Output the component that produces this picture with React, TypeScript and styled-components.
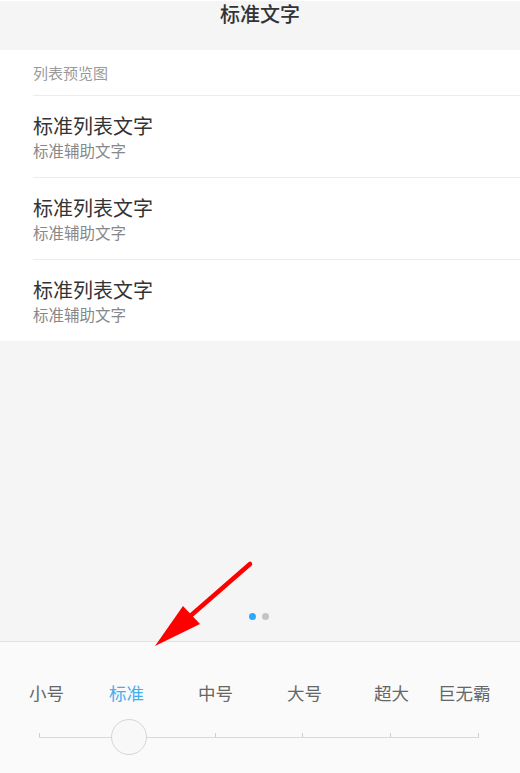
import React from "react";
import styled, { createGlobalStyle } from "styled-components";

const Global = createGlobalStyle`
  html, body { margin: 0; padding: 0; }
  body { font-family: "Noto Sans CJK SC", "Noto Sans", sans-serif; background: #f5f5f5; }
`;

const Page = styled.div`
  position: relative;
  width: 520px;
  height: 773px;
  display: flex;
  flex-direction: column;
  background: #f5f5f5;
  overflow: hidden;
`;

const Header = styled.header`
  height: 49px;
  border-top: 1px solid #ffffff;
  background: #f5f5f5;
  display: flex;
  justify-content: center;
`;

const Title = styled.h1`
  margin: 0;
  font-size: 20px;
  line-height: 26px;
  font-weight: 500;
  color: #333;
`;

const List = styled.section`
  background: #ffffff;
  display: flex;
  flex-direction: column;
`;

const ListHeader = styled.div`
  height: 45px;
  padding-left: 33px;
  display: flex;
  align-items: center;
  font-size: 15px;
  color: #9a9a9a;
`;

const Item = styled.div`
  margin-left: 33px;
  border-top: 1px solid #ececec;
  padding: 18px 0 15px;
  display: flex;
  flex-direction: column;
`;

const ItemTitle = styled.div`
  font-size: 20px;
  line-height: 24px;
  color: #333;
`;

const ItemSub = styled.div`
  font-size: 15.5px;
  line-height: 24px;
  color: #888;
`;

const Spacer = styled.div`
  flex: 1;
  display: flex;
  align-items: flex-end;
  justify-content: center;
  padding-bottom: 21px;
`;

const Dots = styled.div`
  display: flex;
  gap: 6px;
  margin-right: 2px;
`;

const Dot = styled.span<{ $active?: boolean }>`
  width: 7px;
  height: 7px;
  border-radius: 50%;
  background: ${(p) => (p.$active ? "#2ea7f8" : "#c4c4c4")};
`;

const Panel = styled.footer`
  height: 131px;
  border-top: 1px solid #e3e3e3;
  background: #fafafa;
  display: flex;
  flex-direction: column;
`;

const Labels = styled.div`
  display: flex;
  padding: 39px 0 0 29px;
`;

const Label = styled.span<{ $gap: number; $active?: boolean }>`
  margin-left: ${(p) => p.$gap}px;
  font-size: 17.5px;
  line-height: 24px;
  color: ${(p) => (p.$active ? "#44aef2" : "#666")};
`;

const Track = styled.div`
  position: relative;
  margin: 28px 0 0 39px;
  width: 440px;
  height: 4px;
  border-bottom: 1px solid #d9d9d9;
  display: flex;
  justify-content: space-between;
  align-items: flex-end;
`;

const Tick = styled.span`
  width: 1px;
  height: 4px;
  background: #d0d0d0;
`;

const Thumb = styled.span`
  position: absolute;
  left: 72px;
  top: -14px;
  width: 34px;
  height: 34px;
  border-radius: 50%;
  border: 1px solid #d6d6d6;
  background: #f8f8f8;
`;

const Overlay = styled.svg`
  position: absolute;
  left: 0;
  top: 0;
  pointer-events: none;
`;

const labels = [
  { t: "小号", g: 0 },
  { t: "标准", g: 45, a: true },
  { t: "中号", g: 54 },
  { t: "大号", g: 54 },
  { t: "超大", g: 52 },
  { t: "巨无霸", g: 29 },
];

export default function App() {
  return (
    <>
      <Global />
      <Page>
        <Header>
          <Title>标准文字</Title>
        </Header>
        <List>
          <ListHeader>列表预览图</ListHeader>
          {[0, 1, 2].map((i) => (
            <Item key={i}>
              <ItemTitle>标准列表文字</ItemTitle>
              <ItemSub>标准辅助文字</ItemSub>
            </Item>
          ))}
        </List>
        <Spacer>
          <Dots>
            <Dot $active />
            <Dot />
          </Dots>
        </Spacer>
        <Panel>
          <Labels>
            {labels.map((l) => (
              <Label key={l.t} $gap={l.g} $active={l.a}>
                {l.t}
              </Label>
            ))}
          </Labels>
          <Track>
            {[0, 1, 2, 3, 4, 5].map((i) => (
              <Tick key={i} />
            ))}
            <Thumb />
          </Track>
        </Panel>
        <Overlay width="520" height="773" viewBox="0 0 520 773">
          <line x1="250" y1="564" x2="188" y2="618" stroke="#ff0000" strokeWidth="4.5" strokeLinecap="round" />
          <polygon points="155,646 183,606 200,624" fill="#ff0000" />
        </Overlay>
      </Page>
    </>
  );
}
